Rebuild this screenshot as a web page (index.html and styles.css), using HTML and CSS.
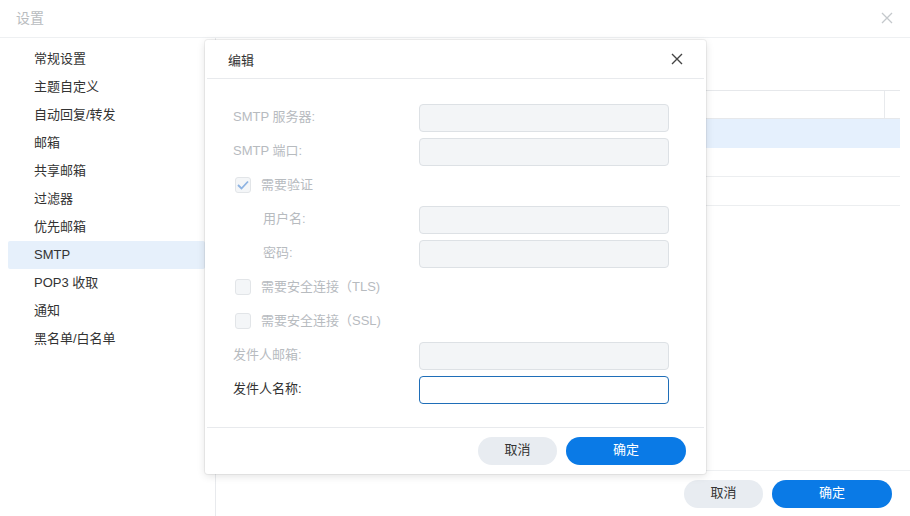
FILE: index.html
```html
<!DOCTYPE html>
<html lang="zh-CN">
<head>
<meta charset="utf-8">
<title>设置</title>
<link rel="stylesheet" href="styles.css">
</head>
<body>
<div class="window">
  <header class="win-head">
    <span class="win-title">设置</span>
    <svg class="win-close" width="12" height="12" viewBox="0 0 12 12"><path d="M1 1L11 11M11 1L1 11" stroke="#c4c8cc" stroke-width="1.3" fill="none"/></svg>
  </header>
  <div class="win-body">
    <nav class="side">
      <div class="side-item">常规设置</div>
      <div class="side-item">主题自定义</div>
      <div class="side-item">自动回复/转发</div>
      <div class="side-item">邮箱</div>
      <div class="side-item">共享邮箱</div>
      <div class="side-item">过滤器</div>
      <div class="side-item">优先邮箱</div>
      <div class="side-item active">SMTP</div>
      <div class="side-item">POP3 收取</div>
      <div class="side-item">通知</div>
      <div class="side-item">黑名单/白名单</div>
    </nav>
    <main class="main">
      <div class="main-content">
        <div class="grid">
          <div class="grid-head"><span class="col-sep"></span></div>
          <div class="grid-row selected"></div>
          <div class="grid-row"></div>
          <div class="grid-row"></div>
        </div>
      </div>
      <div class="main-foot">
        <button class="btn btn-cancel">取消</button>
        <button class="btn btn-ok">确定</button>
      </div>
    </main>
  </div>
</div>

<div class="dialog">
  <div class="dlg-head">
    <span class="dlg-title">编辑</span>
    <svg class="dlg-close" width="12" height="12" viewBox="0 0 12 12"><path d="M1 1L11 11M11 1L1 11" stroke="#444" stroke-width="1.4" fill="none"/></svg>
  </div>
  <div class="dlg-body">
    <div class="row"><label class="lbl off">SMTP 服务器:</label><div class="inp off"></div></div>
    <div class="row"><label class="lbl off">SMTP 端口:</label><div class="inp off"></div></div>
    <div class="row check-row">
      <span class="cb checked"><svg width="12" height="10" viewBox="0 0 12 10"><path d="M1 5L4.5 8.5L11 1.5" stroke="#8db3e2" stroke-width="1.8" fill="none"/></svg></span>
      <span class="lbl off">需要验证</span>
    </div>
    <div class="row"><label class="lbl off sub">用户名:</label><div class="inp off"></div></div>
    <div class="row"><label class="lbl off sub">密码:</label><div class="inp off"></div></div>
    <div class="row check-row"><span class="cb"></span><span class="lbl off">需要安全连接（TLS)</span></div>
    <div class="row check-row"><span class="cb"></span><span class="lbl off">需要安全连接（SSL)</span></div>
    <div class="row"><label class="lbl off">发件人邮箱:</label><div class="inp off"></div></div>
    <div class="row"><label class="lbl">发件人名称:</label><div class="inp focus"></div></div>
  </div>
  <div class="dlg-foot">
    <button class="btn btn-cancel">取消</button>
    <button class="btn btn-ok">确定</button>
  </div>
</div>
</body>
</html>
```
FILE: styles.css
```css
* { box-sizing: border-box; }
html, body { margin: 0; padding: 0; }
body {
  width: 910px;
  height: 516px;
  overflow: hidden;
  background: #fff;
  font-family: "Liberation Sans", "Noto Sans CJK SC", sans-serif;
  font-size: 13px;
  color: #333;
  position: relative;
}

/* background settings window */
.window { display: flex; flex-direction: column; height: 516px; }
.win-head {
  height: 38px;
  flex: none;
  display: flex;
  align-items: center;
  justify-content: space-between;
  padding: 0 17px 2px 16px;
  border-bottom: 1px solid #eef0f2;
}
.win-title { color: #b9bcc0; font-size: 14px; line-height: 20px; }
.win-body { flex: 1; display: flex; min-height: 0; }
.side {
  width: 216px;
  flex: none;
  border-right: 1px solid #e8eaed;
  padding: 7px 0 0 8px;
}
.side-item {
  height: 28px;
  line-height: 27px;
  padding-left: 26px;
  color: #333;
  margin-right: 10px;
}
.side-item.active { background: #e6f0fb; border-radius: 2px; }
.main { flex: 1; display: flex; flex-direction: column; }
.main-content { flex: 1; padding: 52px 10px 0 0; }
.grid { border-top: 1px solid #e6e8eb; }
.grid-head {
  height: 28px;
  border-bottom: 1px solid #e6e8eb;
  display: flex;
  justify-content: flex-end;
  padding-right: 15px;
}
.col-sep { width: 1px; height: 27px; background: #e8eaed; }
.grid-row { height: 29px; border-bottom: 1px solid #eceef0; }
.grid-row.selected { background: #e5f0fd; border-bottom-color: #e5f0fd; }
.main-foot {
  height: 46px;
  border-top: 1px solid #eef0f2;
  display: flex;
  justify-content: flex-end;
  align-items: flex-start;
  gap: 9px;
  padding: 9px 18px 0 0;
}

/* buttons */
.btn {
  height: 28px;
  line-height: 26px;
  padding: 0 0 2px;
  border: none;
  border-radius: 14px;
  font-family: inherit;
  font-size: 13px;
}
.btn-cancel { width: 79px; background: #e8ecf1; color: #333; }
.btn-ok { width: 120px; background: #0a7ae6; color: #fff; }

/* edit dialog */
.dialog {
  position: absolute;
  left: 205px;
  top: 40px;
  width: 501px;
  height: 434px;
  background: #fff;
  border-radius: 3px;
  box-shadow: 0 0 0 1px rgba(0,0,0,0.05), 0 2px 8px rgba(0,0,0,0.12);
  display: flex;
  flex-direction: column;
}
.dlg-head {
  height: 39px;
  flex: none;
  display: flex;
  align-items: center;
  justify-content: space-between;
  padding: 0 21px 0 21px;
  border-bottom: 1px solid #e8eaed;
  margin: 0 2px;
}
.dlg-title { color: #333; font-size: 13px; }
.dlg-body { flex: 1; padding: 25px 0 0 28px; }
.row {
  height: 34px;
  display: flex;
  align-items: flex-start;
}
.lbl { width: 186px; line-height: 26px; flex: none; }
.lbl.sub { padding-left: 30px; }
.lbl.off { color: #b7bbbf; }
.inp {
  width: 250px;
  height: 28px;
  border-radius: 4px;
  border: 1px solid #dde1e5;
}
.inp.off { background: #f3f5f7; }
.inp.focus { background: #fff; border-color: #1f6eb8; }
.check-row { padding-left: 2px; }
.check-row .lbl { width: auto; }
.cb {
  width: 16px;
  height: 16px;
  margin-top: 5px;
  border: 1px solid #e2e5e8;
  border-radius: 3px;
  background: #f4f6f8;
  margin-right: 10px;
  display: flex;
  align-items: center;
  justify-content: center;
}
.dlg-foot {
  height: 47px;
  flex: none;
  border-top: 1px solid #e8eaed;
  margin: 0 2px;
  display: flex;
  justify-content: flex-end;
  align-items: flex-start;
  gap: 9px;
  padding: 9px 18px 0 0;
}
```
